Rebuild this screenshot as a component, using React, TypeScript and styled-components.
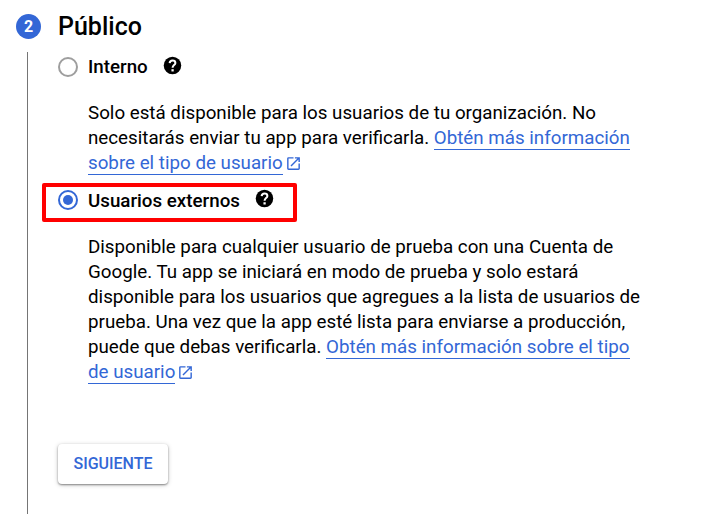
import React from "react";
import styled, { createGlobalStyle } from "styled-components";

const GlobalStyle = createGlobalStyle`
  * { box-sizing: border-box; }
  body { margin: 0; background: #fff; color: #000; font-family: Roboto, "Liberation Sans", sans-serif; }
`;

const Page = styled.main`
  height: 528px;
  overflow: hidden;
  padding: 13px 0 0 16px;
`;
const Header = styled.header`
  display: flex;
  align-items: center;
  gap: 17px;
  height: 27px;
`;
const StepNumber = styled.span`
  display: grid;
  place-items: center;
  width: 25px;
  height: 25px;
  border-radius: 50%;
  background: #3367d6;
  color: #fff;
  font-size: 16px;
  font-weight: 700;
`;
const Title = styled.h2`
  margin: 0;
  font-size: 25px;
  line-height: 27px;
  font-weight: 500;
`;
const StepBody = styled.section`
  height: 462px;
  margin: 12px 0 0 11px;
  padding: 1px 0 0 30px;
  border-left: 1px solid #757575;
`;
const OptionHeader = styled.div`
  position: relative;
  display: flex;
  align-items: center;
  height: 28px;
`;
const Radio = styled.span<{ $checked?: boolean }>`
  display: grid;
  place-items: center;
  width: 20px;
  height: 20px;
  margin-right: 10px;
  border: 2px solid ${(p) => (p.$checked ? "#3367d6" : "#9e9e9e")};
  border-radius: 50%;
  &::after {
    content: "";
    width: 10px;
    height: 10px;
    border-radius: 50%;
    background: ${(p) => (p.$checked ? "#3367d6" : "transparent")};
  }
`;
const OptionName = styled.span<{ $drop?: number }>`
  margin-right: 14px;
  padding-top: ${(p) => p.$drop ?? 0}px;
  font-size: 18.75px;
  line-height: 25px;
  font-weight: 500;
`;
const Description = styled.p<{ $top: number; $bottom: number }>`
  width: 580px;
  margin: ${(p) => p.$top}px 0 ${(p) => p.$bottom}px 30px;
  font-size: 18.75px;
  line-height: 25px;
`;
const Link = styled.a`
  color: #3367d6;
  text-decoration: none;
  border-bottom: 1px solid #3367d6;
`;
const HelpSvg = styled.svg`
  margin-bottom: 4px;
`;
const ExternalSvg = styled.svg`
  margin-left: 2px;
  vertical-align: -3px;
`;
const Highlight = styled.div`
  position: absolute;
  top: -3px;
  left: -16px;
  width: 255px;
  height: 39px;
  border: 4px solid #ff0000;
  border-radius: 2px;
`;
const NextButton = styled.button`
  display: block;
  width: 110px;
  height: 40px;
  padding: 0 0 2px;
  border: 0;
  border-radius: 4px;
  background: #fff;
  box-shadow: 0 1px 2px rgba(0,0,0,.4), 0 1px 5px rgba(0,0,0,.2);
  color: #3367d6;
  font: 500 16px Roboto, sans-serif;
`;

const HelpIcon = () => (
  <HelpSvg width="21" height="21" viewBox="0 0 24 24" aria-hidden="true">
    <circle cx="12" cy="12" r="10" />
    <path d="M8.7 9.2C8.9 7.3 10.2 6.2 12 6.2c2 0 3.3 1.1 3.3 2.8 0 2.5-3.2 2.6-3.2 5.5" fill="none" stroke="#fff" strokeWidth="2.3" />
    <path d="M10.8 16.2h2.6v2.6h-2.6z" fill="#fff" />
  </HelpSvg>
);
const ExternalIcon = () => (
  <ExternalSvg width="17" height="17" viewBox="0 0 24 24" fill="#3367d6" aria-hidden="true">
    <path d="M19 19H5V5h7V3H5a2 2 0 0 0-2 2v14a2 2 0 0 0 2 2h14c1.1 0 2-.9 2-2v-7h-2v7zM14 3v2h3.59l-9.83 9.83 1.41 1.41L19 6.41V10h2V3h-7z" />
  </ExternalSvg>
);

export default function App() {
  return (
    <>
      <GlobalStyle />
      <Page>
        <Header><StepNumber>2</StepNumber><Title>Público</Title></Header>
        <StepBody>
          <OptionHeader><Radio /><OptionName>Interno</OptionName><HelpIcon /></OptionHeader>
          <Description $top={20} $bottom={10}>
            Solo está disponible para los usuarios de tu organización. No<br />
            necesitarás enviar tu app para verificarla. <Link>Obtén más información<br />sobre el tipo de usuario</Link><ExternalIcon />
          </Description>
          <OptionHeader>
            <Radio $checked /><OptionName $drop={2}>Usuarios externos</OptionName><HelpIcon />
            <Highlight />
          </OptionHeader>
          <Description $top={21} $bottom={59}>
            Disponible para cualquier usuario de prueba con una Cuenta de<br />
            Google. Tu app se iniciará en modo de prueba y solo estará<br />
            disponible para los usuarios que agregues a la lista de usuarios de<br />
            prueba. Una vez que la app esté lista para enviarse a producción,<br />
            puede que debas verificarla. <Link>Obtén más información sobre el tipo<br />de usuario</Link><ExternalIcon />
          </Description>
          <NextButton>SIGUIENTE</NextButton>
        </StepBody>
      </Page>
    </>
  );
}
